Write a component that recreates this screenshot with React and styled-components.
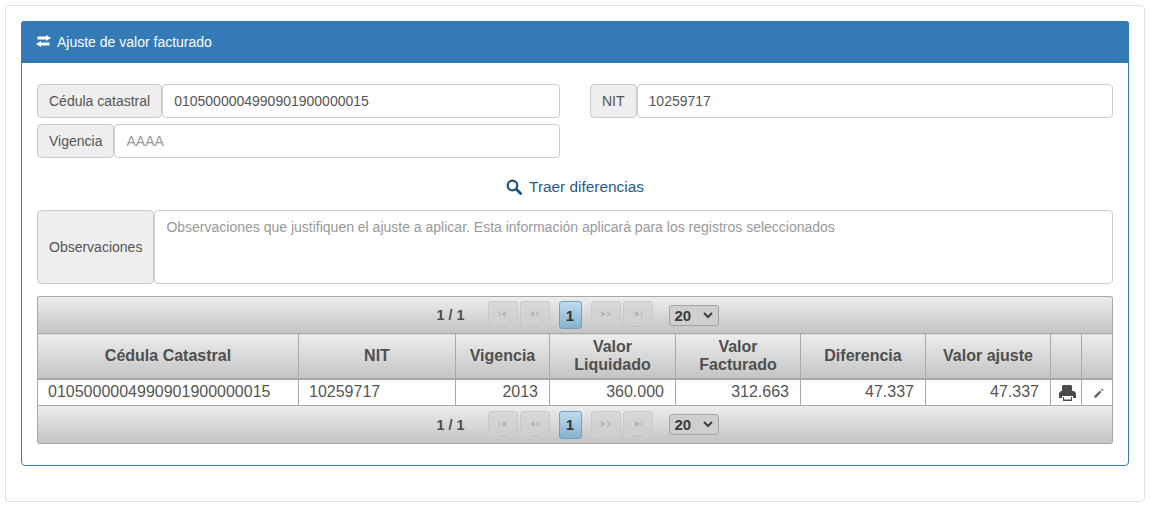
import React from 'react';
import styled, { createGlobalStyle } from 'styled-components';

const GlobalStyle = createGlobalStyle`
  html, body {
    margin: 0;
    padding: 0;
    background: #fff;
    font-family: "Liberation Sans", Arial, sans-serif;
    font-size: 14px;
    color: #555;
  }
  * {
    box-sizing: border-box;
  }
`;

const Well = styled.div`
  width: 1140px;
  height: 497px;
  margin: 5px;
  padding: 15px;
  border: 1px solid #e0e0e0;
  border-radius: 4px;
  background: #fff;
`;

const Panel = styled.section`
  height: 445px;
  border: 1px solid #337ab7;
  border-radius: 4px;
`;

const PanelHeading = styled.header`
  height: 42px;
  margin: -1px -1px 0;
  padding: 0 15px;
  display: flex;
  align-items: center;
  gap: 6px;
  background: #337ab7;
  border-radius: 3px 3px 0 0;
  color: #fff;
  font-size: 14px;
  svg {
    display: block;
    margin-top: -3px;
  }
`;

const PanelBody = styled.div`
  padding: 21px 15px 0;
`;

const FilterGrid = styled.div`
  display: grid;
  grid-template-columns: 523px 523px;
  column-gap: 30px;
  row-gap: 6px;
`;

const InputGroup = styled.div`
  display: flex;
  height: ${(p) => p.$height || 34}px;
`;

const Addon = styled.span`
  flex: none;
  display: flex;
  align-items: center;
  justify-content: center;
  padding: 0 11px;
  background: #eee;
  border: 1px solid #ccc;
  border-radius: 4px;
  color: #555;
  font-size: 14px;
`;

const Field = styled.div`
  flex: 1;
  min-width: 0;
  padding: ${(p) => (p.$multiline ? '8px 11px' : '0 11px')};
  display: flex;
  align-items: ${(p) => (p.$multiline ? 'flex-start' : 'center')};
  background: #fff;
  border: 1px solid #ccc;
  border-radius: 4px;
  color: ${(p) => (p.$placeholder ? '#999' : '#555')};
  font-size: 14px;
`;

const SearchRow = styled.div`
  height: 52px;
  display: flex;
  align-items: center;
  justify-content: center;
  gap: 7px;
  color: #2a5a85;
  font-size: 15.4px;
  padding-top: 5px;
`;

const DataTableBox = styled.div`
  margin-top: 12px;
  border-radius: 3px;
`;

const Paginator = styled.div`
  height: ${(p) => p.$height}px;
  display: flex;
  align-items: center;
  justify-content: center;
  padding-left: 4px;
  background: linear-gradient(#ededed, #c4c4c4);
  border: 1px solid #a8a8a8;
  border-top-width: ${(p) => (p.$bottom ? 0 : 1)}px;
  border-bottom-width: ${(p) => (p.$bottom ? 1 : 0)}px;
  border-radius: ${(p) => (p.$bottom ? '0 0 3px 3px' : '3px 3px 0 0')};
`;

const PageCount = styled.span`
  width: 30px;
  margin: 0 21px 0 1px;
  color: #4f4f4f;
  font-size: 14.4px;
  font-weight: bold;
  white-space: nowrap;
`;

const PageButton = styled.span`
  position: relative;
  width: 30px;
  height: 28px;
  margin-right: 2px;
  display: flex;
  justify-content: center;
  padding-top: 8px;
  border: 1px solid #c9c9c9;
  border-radius: 3px;
  background: linear-gradient(#d8d8d8, #cdcdcd);
  svg {
    display: block;
  }
  &::after {
    content: '';
    position: absolute;
    left: 9px;
    bottom: 1px;
    width: 9px;
    height: 1px;
    background: ${(p) => (p.$noDash ? 'transparent' : '#bdbdbd')};
  }
`;

const CurrentPage = styled.span`
  width: 23px;
  height: 28px;
  margin: 0 9px 0 7px;
  display: flex;
  align-items: center;
  justify-content: center;
  border: 1px solid #74a0bd;
  border-radius: 3px;
  background: linear-gradient(#c0dcee, #85b2d0);
  color: #333;
  font-size: 15px;
  font-weight: bold;
`;

const RowsSelect = styled.span`
  width: 50px;
  height: 21px;
  margin-left: 14px;
  padding: 0 5px;
  display: flex;
  align-items: center;
  justify-content: space-between;
  border: 1px solid #a3a3a3;
  border-radius: 3px;
  background: #cfcfcf;
  color: #3c3c3c;
  font-size: 15px;
  font-weight: bold;
`;

const Table = styled.table`
  width: 1075px;
  table-layout: fixed;
  border-collapse: collapse;
  font-size: 16px;
`;

const HeadCell = styled.th`
  height: 45px;
  padding: 0 10px;
  background: linear-gradient(#ededed, #c4c4c4);
  border: 1px solid #a8a8a8;
  border-bottom: 2px solid #a8a8a8;
  color: #4f4f4f;
  font-size: 16px;
  font-weight: bold;
  line-height: 18px;
  text-align: center;
`;

const Cell = styled.td`
  height: 27px;
  padding: ${(p) => (p.$icon ? '1px 0 0 3px' : p.$right ? '0 11px 0 10px' : '0 10px')};
  border: 1px solid #a8a8a8;
  color: #555;
  line-height: 18px;
  text-align: ${(p) => (p.$right ? 'right' : p.$icon ? 'center' : 'left')};
  white-space: nowrap;
  svg {
    display: block;
    margin: 0 auto;
  }
`;

const TransferIcon = () => (
  <svg width="15" height="12" viewBox="0 0 15 12" fill="#fff">
    <path d="M10 0l5 3-5 3V4.500H1.500v-3H10z" />
    <path d="M5 6v1.500h8.500v3H5V12L0 9z" />
  </svg>
);

const SearchIcon = () => (
  <svg width="16" height="16" viewBox="0 0 16 16" fill="none" stroke="#23527c">
    <circle cx="6.500" cy="6.500" r="4.800" strokeWidth="2.200" />
    <path d="M10 10l4.600 4.600" strokeWidth="2.800" strokeLinecap="round" />
  </svg>
);

const PrinterIcon = () => (
  <svg width="17" height="16" viewBox="0 0 17 16" fill="#4a4a4a">
    <path d="M4 0h8l1 1v5H3V1z" />
    <path d="M2 6h13l2 2v5h-3v-2H3v2H0V8z" />
    <path d="M4 12h9v4H4z" />
    <path d="M5 12h7v2.500H5z" fill="#fff" />
  </svg>
);

const PencilIcon = () => (
  <svg width="10" height="10" viewBox="0 0 10 10" fill="#6a6a6a">
    <path d="M0 10l.6-2.400L6 2.400 7.600 4 2.400 9.400z" />
    <path d="M7 1.400L8 .4l1.600 1.600-1 1z" />
  </svg>
);

const NavIcon = ({ d }) => (
  <svg width="12" height="8" viewBox="0 0 12 8" fill="#b4b4b4">
    <path d={d} />
  </svg>
);

const navIcons = [
  { d: 'M2 1h1v6H2zM9 1v6L4 4z' },
  { d: 'M1 4l4-3v6zM6 4l4-3v1.500L8 4l2 1.500V7z' },
  { d: 'M1 1l5 3-5 3zM7 1l4 3-4 3V5.500L9 4 7 2.500z' },
  { d: 'M3 1l5 3-5 3zM9 1h1v6H9z' },
];

const columns = [
  { label: 'Cédula Catastral', width: 261 },
  { label: 'NIT', width: 157 },
  { label: 'Vigencia', width: 94 },
  { label: ['Valor', 'Liquidado'], width: 126 },
  { label: ['Valor', 'Facturado'], width: 125 },
  { label: 'Diferencia', width: 125 },
  { label: 'Valor ajuste', width: 125 },
  { label: '', width: 31 },
  { label: '', width: 31 },
];

const row = {
  cedula: '0105000004990901900000015',
  nit: '10259717',
  vigencia: '2013',
  liquidado: '360.000',
  facturado: '312.663',
  diferencia: '47.337',
  ajuste: '47.337',
};

const Pager = ({ bottom, height }) => (
  <Paginator $bottom={bottom} $height={height}>
    <PageCount>1 / 1</PageCount>
    <PageButton>
      <NavIcon d={navIcons[0].d} />
    </PageButton>
    <PageButton>
      <NavIcon d={navIcons[1].d} />
    </PageButton>
    <CurrentPage>1</CurrentPage>
    <PageButton $noDash>
      <NavIcon d={navIcons[2].d} />
    </PageButton>
    <PageButton>
      <NavIcon d={navIcons[3].d} />
    </PageButton>
    <RowsSelect>
      20
      <svg width="10" height="7" viewBox="0 0 10 7" fill="none" stroke="#3c3c3c" strokeWidth="2">
        <path d="M1 1l4 4 4-4" />
      </svg>
    </RowsSelect>
  </Paginator>
);

const App = () => (
  <>
    <GlobalStyle />
    <Well>
      <Panel>
        <PanelHeading>
          <TransferIcon />
          Ajuste de valor facturado
        </PanelHeading>
        <PanelBody>
          <FilterGrid>
            <InputGroup>
              <Addon>Cédula catastral</Addon>
              <Field>{row.cedula}</Field>
            </InputGroup>
            <InputGroup>
              <Addon>NIT</Addon>
              <Field>{row.nit}</Field>
            </InputGroup>
            <InputGroup>
              <Addon>Vigencia</Addon>
              <Field $placeholder>AAAA</Field>
            </InputGroup>
          </FilterGrid>
          <SearchRow>
            <SearchIcon />
            Traer diferencias
          </SearchRow>
          <InputGroup $height={74}>
            <Addon>Observaciones</Addon>
            <Field $multiline $placeholder>
              Observaciones que justifiquen el ajuste a aplicar. Esta información aplicará para los
              registros seleccionados
            </Field>
          </InputGroup>
          <DataTableBox>
            <Pager height={37} />
            <Table>
              <colgroup>
                {columns.map((col, i) => (
                  <col key={i} style={{ width: col.width }} />
                ))}
              </colgroup>
              <thead>
                <tr>
                  {columns.map((col, i) => (
                    <HeadCell key={i}>
                      {Array.isArray(col.label) ? (
                        <>
                          {col.label[0]}
                          <br />
                          {col.label[1]}
                        </>
                      ) : (
                        col.label
                      )}
                    </HeadCell>
                  ))}
                </tr>
              </thead>
              <tbody>
                <tr>
                  <Cell>{row.cedula}</Cell>
                  <Cell>{row.nit}</Cell>
                  <Cell $right>{row.vigencia}</Cell>
                  <Cell $right>{row.liquidado}</Cell>
                  <Cell $right>{row.facturado}</Cell>
                  <Cell $right>{row.diferencia}</Cell>
                  <Cell $right>{row.ajuste}</Cell>
                  <Cell $icon>
                    <PrinterIcon />
                  </Cell>
                  <Cell $icon>
                    <PencilIcon />
                  </Cell>
                </tr>
              </tbody>
            </Table>
            <Pager bottom height={38} />
          </DataTableBox>
        </PanelBody>
      </Panel>
    </Well>
  </>
);

export default App;
